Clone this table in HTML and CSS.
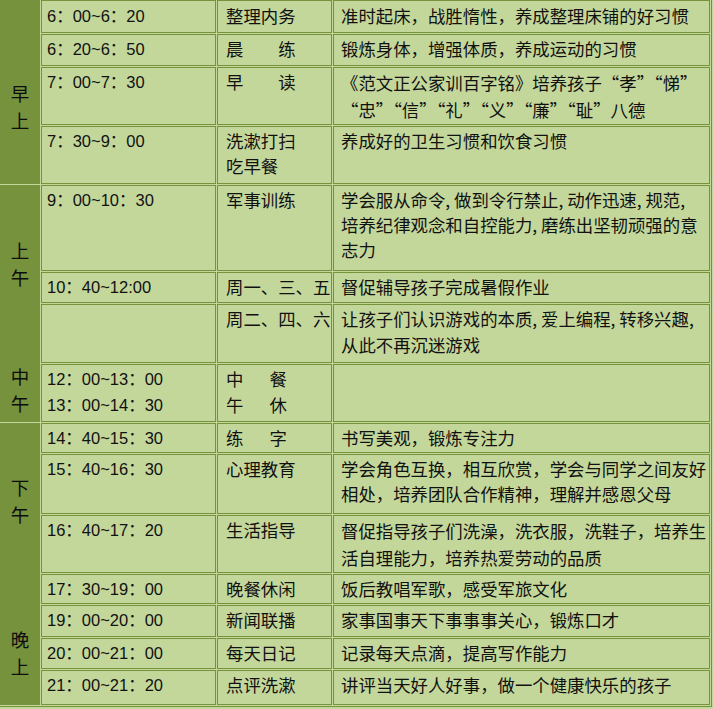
FILE: index.html
```html
<!DOCTYPE html>
<html lang="zh-CN">
<head>
<meta charset="utf-8">
<title>作息时间表</title>
<link rel="stylesheet" href="styles.css">
</head>
<body>
<div class="schedule">
  <div class="label label-morning"><p class="pair">早<br>上</p></div>
  <div class="label label-noon"><p class="pair">上<br>午</p><p class="pair pair-noon">中<br>午</p></div>
  <div class="label label-evening"><p class="pair">下<br>午</p><p class="pair pair-night">晚<br>上</p></div>

  <div class="cell time first">6：00~6：20</div>
  <div class="cell act first">整理内务</div>
  <div class="cell desc first">准时起床，战胜惰性，养成整理床铺的好习惯</div>

  <div class="cell time">6：20~6：50</div>
  <div class="cell act">晨　　练</div>
  <div class="cell desc">锻炼身体，增强体质，养成运动的习惯</div>

  <div class="cell time">7：00~7：30</div>
  <div class="cell act">早　　读</div>
  <div class="cell desc lh27">《范文正公家训百字铭》培养孩子“孝”“悌”<br>“忠”“信”“礼”“义”“廉”“耻”八德</div>

  <div class="cell time">7：30~9：00</div>
  <div class="cell act lh25">洗漱打扫<br>吃早餐</div>
  <div class="cell desc">养成好的卫生习惯和饮食习惯</div>

  <div class="cell time">9：00~10：30</div>
  <div class="cell act">军事训练</div>
  <div class="cell desc lh25">学会服从命令, 做到令行禁止, 动作迅速, 规范,<br>培养纪律观念和自控能力, 磨练出坚韧顽强的意<br>志力</div>

  <div class="cell time">10：40~12:00</div>
  <div class="cell act">周一、三、五</div>
  <div class="cell desc">督促辅导孩子完成暑假作业</div>

  <div class="cell time"></div>
  <div class="cell act">周二、四、六</div>
  <div class="cell desc">让孩子们认识游戏的本质, 爱上编程, 转移兴趣,<br>从此不再沉迷游戏</div>

  <div class="cell time">12：00~13：00<br>13：00~14：30</div>
  <div class="cell act">中&emsp;&ensp;餐<br>午&emsp;&ensp;休</div>
  <div class="cell desc"></div>

  <div class="cell time">14：40~15：30</div>
  <div class="cell act">练&emsp;&ensp;字</div>
  <div class="cell desc">书写美观，锻炼专注力</div>

  <div class="cell time">15：40~16：30</div>
  <div class="cell act">心理教育</div>
  <div class="cell desc lh25">学会角色互换，相互欣赏，学会与同学之间友好<br>相处，培养团队合作精神，理解并感恩父母</div>

  <div class="cell time">16：40~17：20</div>
  <div class="cell act">生活指导</div>
  <div class="cell desc lh27">督促指导孩子们洗澡，洗衣服，洗鞋子，培养生<br>活自理能力，培养热爱劳动的品质</div>

  <div class="cell time">17：30~19：00</div>
  <div class="cell act">晚餐休闲</div>
  <div class="cell desc">饭后教唱军歌，感受军旅文化</div>

  <div class="cell time">19：00~20：00</div>
  <div class="cell act">新闻联播</div>
  <div class="cell desc">家事国事天下事事事关心，锻炼口才</div>

  <div class="cell time">20：00~21：00</div>
  <div class="cell act">每天日记</div>
  <div class="cell desc">记录每天点滴，提高写作能力</div>

  <div class="cell time">21：00~21：20</div>
  <div class="cell act">点评洗漱</div>
  <div class="cell desc">讲评当天好人好事，做一个健康快乐的孩子</div>
</div>
</body>
</html>
```

FILE: styles.css
```css
html, body {
  margin: 0;
  padding: 0;
  background: #c4d79b;
}

.schedule {
  display: grid;
  grid-template-columns: 40px 175px 115px 377px;
  grid-template-rows: 33px 32px 58px 58px 86px 31px 59px 58px 30px 60px 58px 30px 32px 31px 35px;
  gap: 1px;
  width: max-content;
  padding: 0 1px 1px 0;
  border-right: 1px solid #76923c;
  border-bottom: 1px solid #76923c;
  background: #c4d79b;
  font-family: "Noto Sans CJK SC", sans-serif;
  color: #111;
}

.label {
  grid-column: 1;
  background: #76923c;
  text-align: center;
  font-size: 18.5px;
  line-height: 27px;
  color: #0d0d0d;
}

.label-morning {
  grid-row: 1 / 5;
  padding-top: 80px;
}

.label-noon {
  grid-row: 5 / 9;
  padding-top: 52px;
}

.label-evening {
  grid-row: 9 / 16;
  padding-top: 51px;
}

.pair {
  margin: 0;
}

.pair-noon {
  margin-top: 72px;
}

.pair-night {
  margin-top: 98px;
}

.cell {
  box-sizing: border-box;
  border: 1px solid #76923c;
  background: #c4d79b;
  padding: 1px 0 0 7px;
  font-size: 17.4px;
  line-height: 26px;
  white-space: nowrap;
  overflow: hidden;
}

.cell.first {
  padding-top: 2px;
}

.time {
  font-family: "Liberation Sans", "Noto Sans CJK SC", sans-serif;
  font-size: 16.5px;
  padding-left: 5px;
}

.act {
  padding-left: 8px;
}

.desc {
  padding-left: 7px;
}

.lh25 {
  line-height: 25px;
}

.lh27 {
  line-height: 27px;
}
```
